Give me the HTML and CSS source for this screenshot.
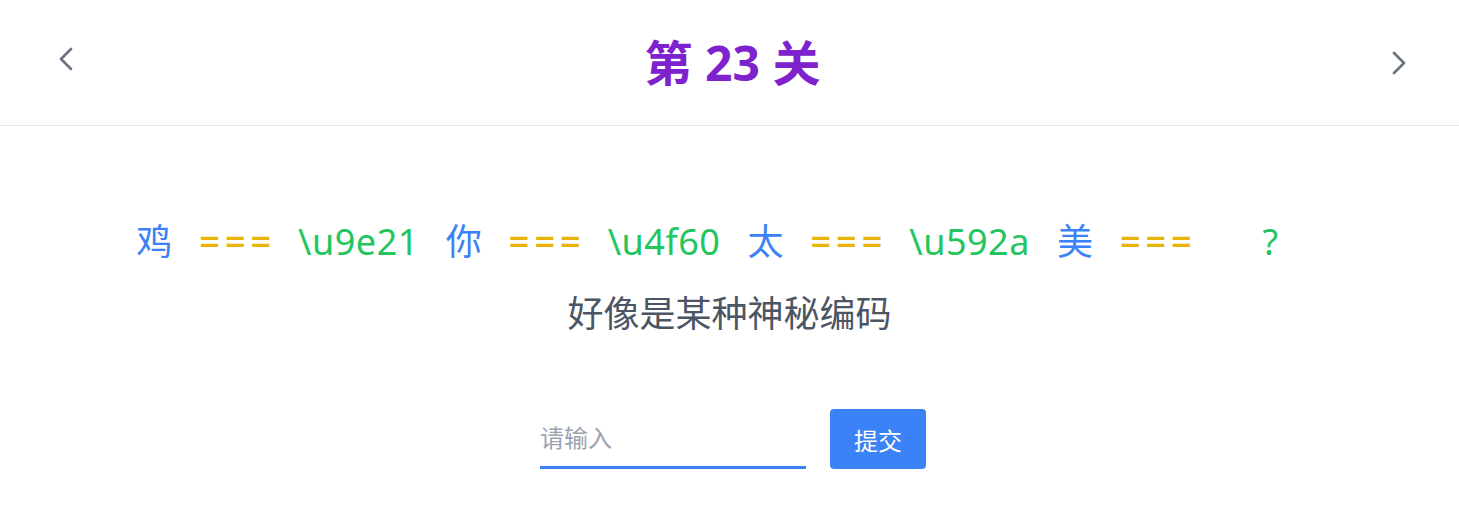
FILE: index.html
```html
<!DOCTYPE html>
<html>
    <head>
        <meta charset="utf-8">
        <title>第 23 关</title>
        <link rel="stylesheet" href="styles.css">
    </head>
    <body>
        <header class="topbar">
            <button class="nav prev" type="button" aria-label="上一关">
                <svg viewBox="0 0 24 24" fill="none" stroke="currentColor" stroke-width="2"><path stroke-linecap="round" stroke-linejoin="round" d="M15.75 19.5L8.25 12l7.5-7.5"/></svg>
            </button>
            <h1 class="title">第 23 关</h1>
            <button class="nav next" type="button" aria-label="下一关">
                <svg viewBox="0 0 24 24" fill="none" stroke="currentColor" stroke-width="2"><path stroke-linecap="round" stroke-linejoin="round" d="M8.25 4.5l7.5 7.5-7.5 7.5"/></svg>
            </button>
        </header>

        <main class="level">
            <div class="puzzle">
                <span class="char">鸡</span>
                <span class="eq">===</span>
                <span class="code">\u9e21</span>
                <span class="char">你</span>
                <span class="eq">===</span>
                <span class="code">\u4f60</span>
                <span class="char">太</span>
                <span class="eq">===</span>
                <span class="code">\u592a</span>
                <span class="char">美</span>
                <span class="eq">===</span>
                <span class="code answer">?</span>
            </div>
            <p class="hint">好像是某种神秘编码</p>

            <form class="answer-form">
                <input class="answer-input" type="text" placeholder="请输入">
                <button class="submit" type="button">提交</button>
            </form>
        </main>
    </body>
</html>
```

FILE: styles.css
```css
body {
    margin: 0;
    font-family: "Noto Sans", "Noto Sans CJK SC", sans-serif;
    background: #fff;
    color: #111827;
}
.topbar {
    height: 125px;
    border-bottom: 1px solid #e5e7eb;
    display: grid;
    grid-template-columns: 1fr auto 1fr;
    align-items: center;
    padding: 0 44px 0 50px;
}
.nav {
    width: 32px;
    height: 32px;
    padding: 0;
    border: 0;
    background: none;
    color: #6b7280;
    cursor: pointer;
}
.nav svg {
    width: 32px;
    height: 32px;
    display: block;
}
.prev {
    justify-self: start;
    margin-top: -8px;
}
.next {
    justify-self: end;
}
.title {
    margin: 0;
    font-size: 48px;
    font-weight: 700;
    color: #7e22ce;
    line-height: 1;
}
.level {
    padding-top: 96px;
    text-align: center;
}
.puzzle {
    display: flex;
    justify-content: center;
    gap: 27px;
    font-size: 36px;
    line-height: 40px;
}
.char {
    color: #3b82f6;
}
.eq {
    color: #eab308;
    font-weight: 600;
    letter-spacing: 5px;
    margin-right: -5px;
}
.code {
    color: #22c55e;
    letter-spacing: 0.5px;
}
.answer {
    width: 104px;
    text-align: center;
}
.hint {
    margin: 32px 0 0;
    font-size: 36px;
    line-height: 40px;
    color: #4b5563;
}
.answer-form {
    margin-top: 75px;
    display: flex;
    justify-content: center;
    align-items: stretch;
    gap: 24px;
    padding-left: 7px;
}
.answer-input {
    width: 266px;
    box-sizing: border-box;
    border: 0;
    border-bottom: 3px solid #3b82f6;
    outline: none;
    padding: 0;
    font-family: inherit;
    font-size: 24px;
    color: #374151;
    background: transparent;
}
.answer-input::placeholder {
    color: #9ca3af;
}
.submit {
    width: 96px;
    height: 60px;
    border: 0;
    border-radius: 4px;
    background: #3b82f6;
    color: #fff;
    font-family: inherit;
    font-size: 24px;
    cursor: pointer;
}
```
